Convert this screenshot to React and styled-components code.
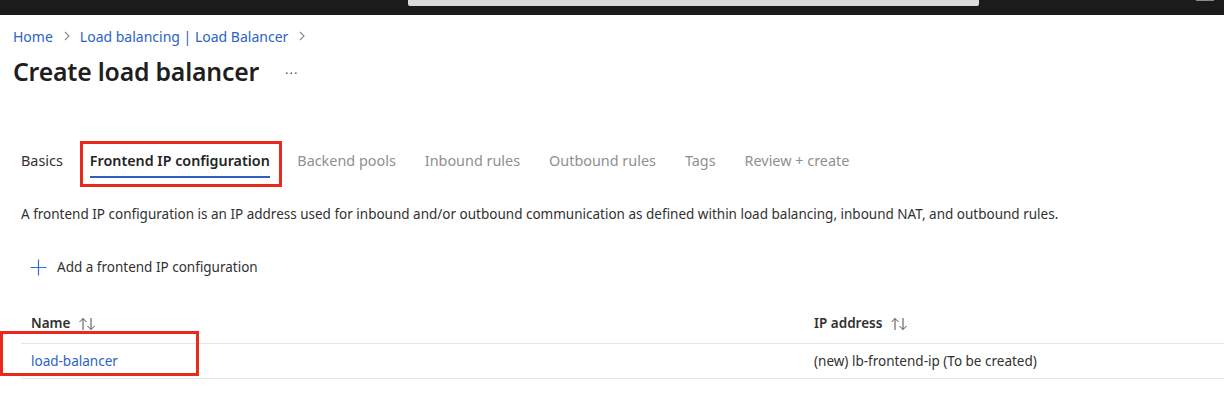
import React from "react";
import styled, { createGlobalStyle } from "styled-components";

const Global = createGlobalStyle`
  html, body { margin: 0; padding: 0; background: #fff; }
  body { font-family: "Noto Sans", "Open Sans", sans-serif; color: #323130; }
`;

const TopBar = styled.div`
  height: 15px;
  background: #1b1b1b;
  display: flex;
  align-items: flex-start;
  padding-left: 408px;
`;

const SearchStub = styled.div`
  width: 571px;
  height: 6px;
  background: #dcdbd9;
  border-radius: 0 0 2px 2px;
`;

const CornerMark = styled.div`
  margin-left: auto;
  margin-right: 10px;
  width: 18px;
  height: 1px;
  background: #8a8a8a;
`;

const Header = styled.div`
  padding: 0 13px;
`;

const Crumbs = styled.nav`
  display: flex;
  align-items: center;
  height: 20px;
  margin-top: 11px;
  font-size: 14px;
`;

const CrumbLink = styled.a`
  color: #2b62c9;
  text-decoration: none;
`;

const Chevron = styled.svg`
  width: 8px;
  height: 10px;
  margin: 0 9px 0 10px;
  flex: none;
`;

const TitleRow = styled.div`
  display: flex;
  align-items: center;
  height: 32px;
  margin-top: 9px;
`;

const Title = styled.h1`
  margin: 0;
  font-size: 24.8px;
  font-weight: 600;
  color: #1f1f1f;
  letter-spacing: -0.2px;
`;

const More = styled.span`
  margin-left: 26px;
  font-size: 13px;
  color: #555;
  letter-spacing: 1px;
  position: relative;
  top: 2px;
`;

const Content = styled.div`
  padding-left: 21px;
`;

const Tabs = styled.div`
  display: flex;
  align-items: stretch;
  height: 46px;
  margin-top: 50px;
  margin-left: -14px;
`;

const Tab = styled.div`
  position: relative;
  display: flex;
  align-items: center;
  padding: 0 ${(p) => (p.$active ? "13px" : p.$done ? "14px" : "14.5px")};
  font-size: ${(p) => (p.$active ? 14.3 : 14.4)}px;
  font-weight: ${(p) => (p.$active ? 600 : 400)};
  color: ${(p) => (p.$active ? "#242424" : p.$done ? "#323130" : "#8f8f8f")};
  white-space: nowrap;
  &::after {
    content: "";
    display: ${(p) => (p.$active ? "block" : "none")};
    position: absolute;
    left: 13px;
    right: 13px;
    top: 39px;
    height: 2px;
    background: #2f5fc6;
  }
`;

const RedBox = styled.div`
  position: absolute;
  border: 3px solid #e8291c;
  pointer-events: none;
  ${(p) => p.$css}
`;

const Description = styled.p`
  margin: 21px 0 0;
  font-size: 13.5px;
  line-height: 20px;
  color: #323130;
`;

const AddButton = styled.button`
  display: flex;
  align-items: center;
  gap: 10px;
  margin: 33px 0 0 9px;
  padding: 0;
  border: 0;
  background: none;
  font: inherit;
  font-size: 13.5px;
  color: #323130;
  height: 20px;
`;

const Table = styled.div`
  margin-top: 25px;
  position: relative;
`;

const Row = styled.div`
  display: grid;
  grid-template-columns: 783px 1fr;
  height: ${(p) => p.$h}px;
  align-items: center;
  border-bottom: 1px solid #e6e5e4;
`;

const Cell = styled.div`
  padding-left: 10px;
  font-size: 13.5px;
  font-weight: ${(p) => (p.$head ? 600 : 400)};
  color: ${(p) => (p.$link ? "#2b62c9" : "#323130")};
  display: flex;
  align-items: center;
  gap: 8px;
`;

const SortIcon = styled.svg`
  width: 18px;
  height: 14px;
  position: relative;
  top: 1px;
`;

const Sort = () => (
  <SortIcon viewBox="0 0 18 14" fill="none" stroke="#4a4a4a" strokeWidth="1">
    <path d="M5 13V1.5M1.5 5L5 1.5 8.5 5" />
    <path d="M13 1v11.5M9.5 9l3.5 3.5L16.5 9" />
  </SortIcon>
);

const Chev = () => (
  <Chevron viewBox="0 0 8 10" fill="none" stroke="#8a8886" strokeWidth="1.1">
    <path d="M2 1l4 4-4 4" />
  </Chevron>
);

const tabs = [
  { label: "Basics", done: true },
  { label: "Frontend IP configuration", active: true },
  { label: "Backend pools" },
  { label: "Inbound rules" },
  { label: "Outbound rules" },
  { label: "Tags" },
  { label: "Review + create" },
];

export default function App() {
  return (
    <>
      <Global />
      <TopBar>
        <SearchStub />
        <CornerMark />
      </TopBar>
      <Header>
        <Crumbs>
          <CrumbLink>Home</CrumbLink>
          <Chev />
          <CrumbLink>Load balancing | Load Balancer</CrumbLink>
          <Chev />
        </Crumbs>
        <TitleRow>
          <Title>Create load balancer</Title>
          <More>···</More>
        </TitleRow>
      </Header>
      <Content>
        <Tabs>
          {tabs.map((t) => (
            <Tab key={t.label} $active={t.active} $done={t.done}>
              {t.label}
              {t.active && <RedBox $css="left: 3px; right: 1px; top: 4px; bottom: -4px;" />}
            </Tab>
          ))}
        </Tabs>
        <Description>
          A frontend IP configuration is an IP address used for inbound and/or outbound communication as defined within load balancing, inbound NAT, and outbound rules.
        </Description>
        <AddButton>
          <svg width="17" height="17" viewBox="0 0 17 17" fill="none" stroke="#2f6fe0" strokeWidth="1.2">
            <path d="M8.5 0.5v16M0.5 8.5h16" />
          </svg>
          Add a frontend IP configuration
        </AddButton>
        <Table>
          <Row $h={41}>
            <Cell $head>
              Name <Sort />
            </Cell>
            <Cell $head>
              IP address <Sort />
            </Cell>
          </Row>
          <Row $h={34}>
            <Cell $link>load-balancer</Cell>
            <Cell>(new) lb-frontend-ip (To be created)</Cell>
          </Row>
          <RedBox $css="left: -21px; width: 193px; top: 29px; height: 39px;" />
        </Table>
      </Content>
    </>
  );
}
